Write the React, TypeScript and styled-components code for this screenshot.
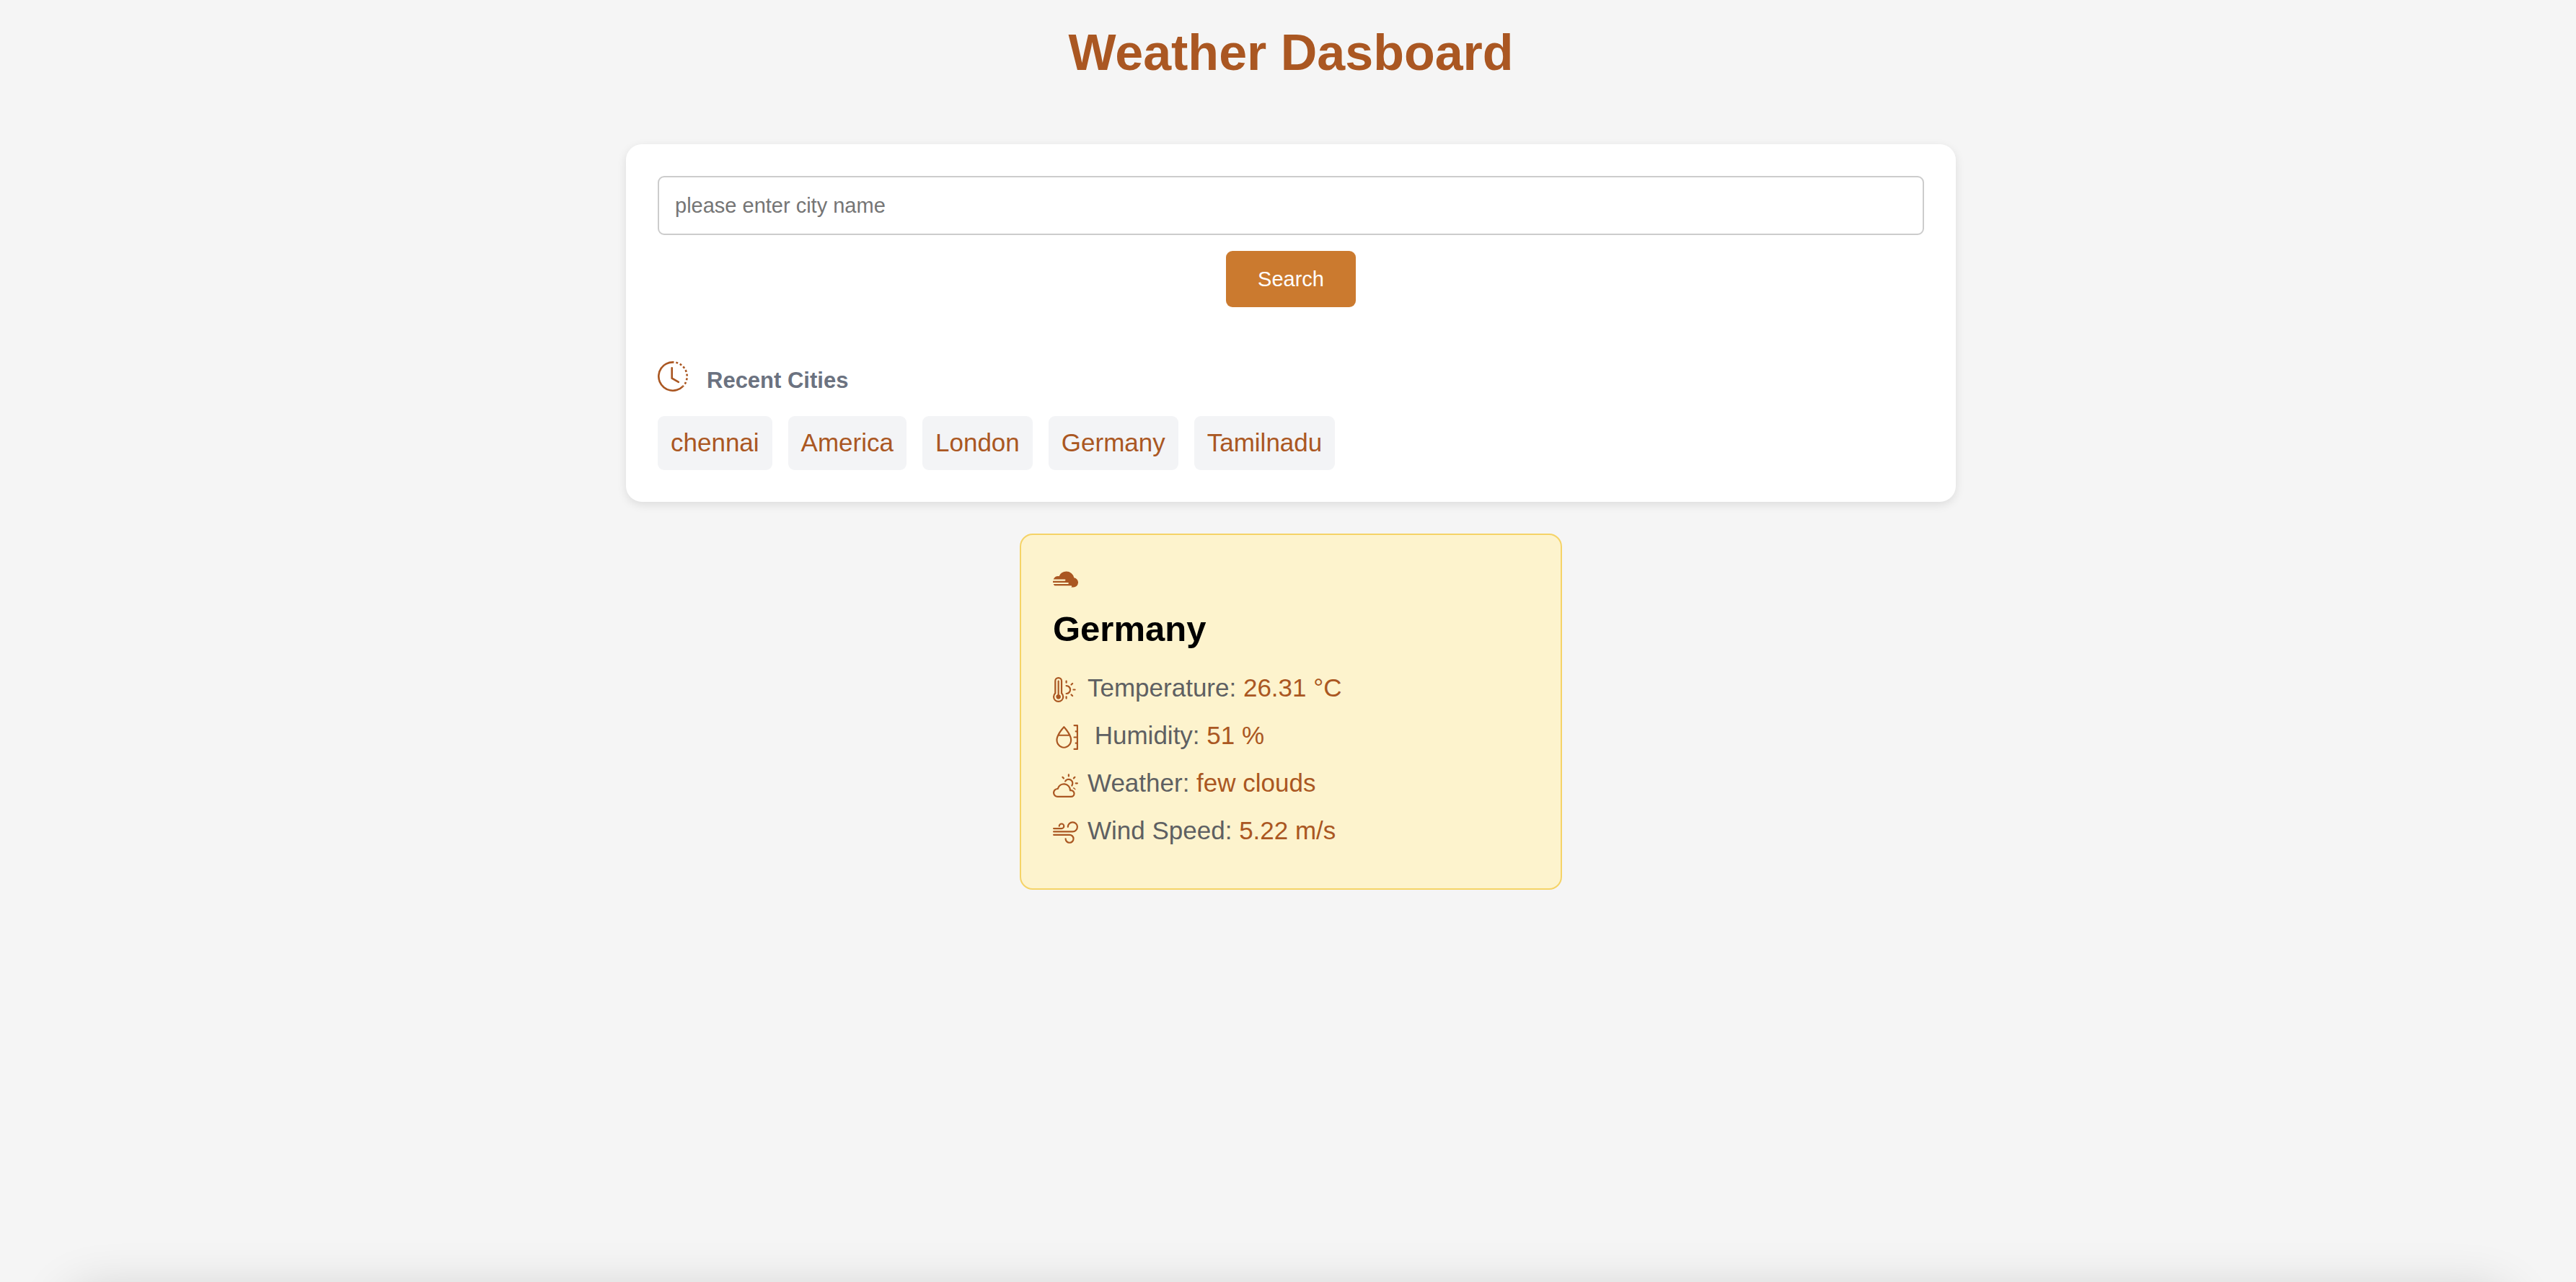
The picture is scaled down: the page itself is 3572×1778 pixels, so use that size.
import React, { useState } from "react";
import styled, { createGlobalStyle } from "styled-components";
import {
  BsClockHistory,
  BsCloudFog2Fill,
  BsCloudSun,
  BsMoisture,
  BsThermometerSun,
  BsWind,
} from "react-icons/bs";

const GlobalStyle = createGlobalStyle`
  * { box-sizing: border-box; }
  body {
    margin: 0;
    background: #f5f5f5;
    font-family: "Liberation Sans", Arial, sans-serif;
    font-size: 35px;
  }
`;

const Page = styled.div`
  display: flex;
  flex-direction: column;
  align-items: center;
  min-height: 100vh;
  padding: 33px 0 0 8px;
  overflow: hidden;
`;

const Title = styled.h1`
  margin: 0 0 87px;
  font-size: 70px;
  line-height: 80px;
  color: #aa5722;
`;

const Panel = styled.main`
  width: 100%;
  max-width: 1844px;
  padding: 44px;
  border-radius: 22px;
  background: #fff;
  box-shadow: 0 4px 13px rgba(0, 0, 0, 0.1);
`;

const SearchForm = styled.form`
  display: flex;
  flex-direction: column;
  align-items: center;
  gap: 22px;
  margin-bottom: 75px;
`;

const CityInput = styled.input`
  width: 100%;
  height: 82px;
  padding: 0 22px;
  border: 2px solid #ccc;
  border-radius: 9px;
  background: #fff;
  font: inherit;
  font-size: 29px;
  &::placeholder { color: #757575; }
`;

const SearchButton = styled.button`
  padding: 22px 44px;
  border: 0;
  border-radius: 9px;
  background: #cb7a2f;
  color: #fff;
  font: inherit;
  font-size: 29px;
  line-height: 34px;
`;

const RecentHeading = styled.h2`
  display: flex;
  align-items: flex-start;
  gap: 26px;
  margin: 0 0 31px;
  font-size: 31px;
  line-height: 36px;
  color: #6b7280;
  svg {
    width: 42px;
    height: 42px;
    color: #aa5722;
  }
`;

const HeadingText = styled.span`
  padding-top: 9px;
`;

const Chips = styled.div`
  display: flex;
  flex-wrap: wrap;
  gap: 22px;
`;

const Chip = styled.button`
  padding: 17px 18px 18px;
  border: 0;
  border-radius: 9px;
  background: #f3f4f6;
  color: #aa5722;
  font: inherit;
  line-height: 40px;
`;

const WeatherCard = styled.section`
  width: 100%;
  max-width: 752px;
  margin-top: 44px;
  padding: 44px 44px 58px;
  border: 2px solid #f5d367;
  border-radius: 18px;
  background: #fdf3cd;
`;

const Icon = styled.span`
  display: inline-block;
  width: 35px;
  height: 35px;
  margin-right: 13px;
  color: #aa5722;
  vertical-align: middle;
  svg {
    display: block;
    width: 100%;
    height: 100%;
  }
`;

const CardIcon = styled(Icon)`
  display: block;
  margin: 0 0 22px;
`;

const CityName = styled.h2`
  margin: 0 0 31px;
  font-size: 49px;
  line-height: 58px;
  color: #000;
`;

const Reading = styled.p`
  margin: 0 0 22px;
  line-height: 44px;
  color: #5e6062;
  white-space: pre;
  &:last-child { margin-bottom: 0; }
`;

const Value = styled.span`
  color: #aa5722;
`;

const BottomShade = styled.div`
  position: fixed;
  left: 90px;
  right: 90px;
  bottom: -112px;
  height: 100px;
  border-radius: 40px;
  box-shadow: 0 0 70px rgba(0, 0, 0, 0.16);
  pointer-events: none;
`;

const cities = ["chennai", "America", "London", "Germany", "Tamilnadu"];

const readings = [
  { icon: <BsThermometerSun />, label: "Temperature: ", value: "26.31 °C" },
  { icon: <BsMoisture />, label: " Humidity: ", value: "51 %" },
  { icon: <BsCloudSun />, label: "Weather: ", value: "few clouds" },
  { icon: <BsWind />, label: "Wind Speed: ", value: "5.22 m/s" },
];

export default function App() {
  const [query, setQuery] = useState("");
  return (
    <Page>
      <GlobalStyle />
      <Title>Weather Dasboard</Title>
      <Panel>
        <SearchForm onSubmit={(e) => e.preventDefault()}>
          <CityInput
            type="text"
            aria-label="City name"
            placeholder="please enter city name"
            value={query}
            onChange={(e) => setQuery(e.target.value)}
          />
          <SearchButton type="submit">Search</SearchButton>
        </SearchForm>
        <RecentHeading>
          <BsClockHistory />
          <HeadingText>Recent Cities</HeadingText>
        </RecentHeading>
        <Chips>
          {cities.map((city) => (
            <Chip key={city} type="button" onClick={() => setQuery(city)}>
              {city}
            </Chip>
          ))}
        </Chips>
      </Panel>
      <WeatherCard>
        <CardIcon>
          <BsCloudFog2Fill />
        </CardIcon>
        <CityName>Germany</CityName>
        {readings.map((r) => (
          <Reading key={r.label}>
            <Icon>{r.icon}</Icon>
            {r.label}
            <Value>{r.value}</Value>
          </Reading>
        ))}
      </WeatherCard>
      <BottomShade />
    </Page>
  );
}
